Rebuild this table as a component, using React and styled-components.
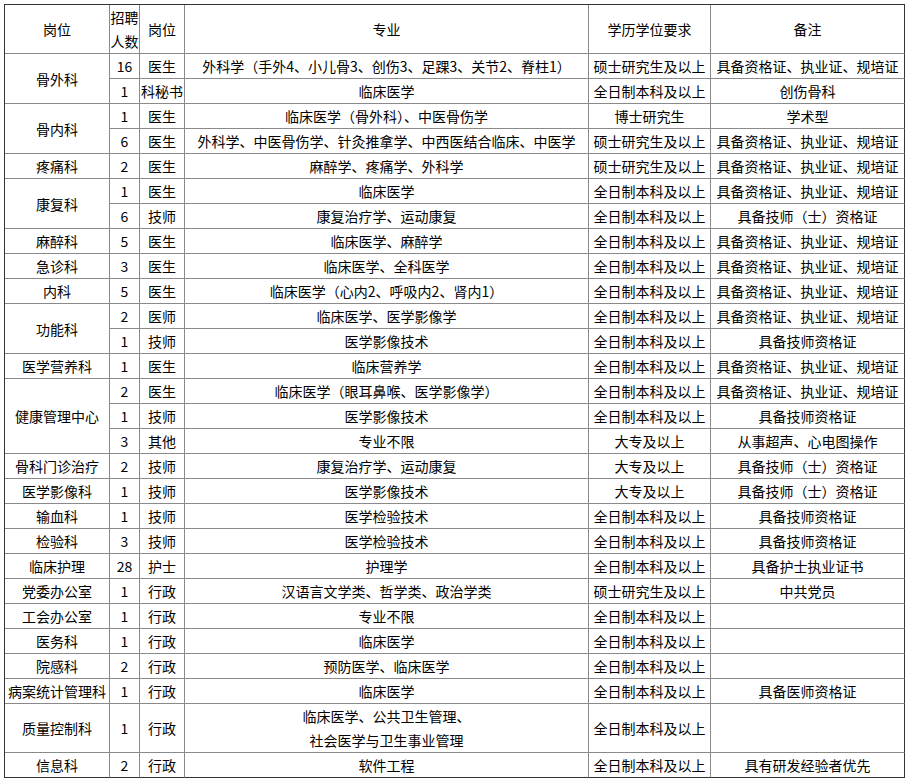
import React from 'react';
import styled, { createGlobalStyle } from 'styled-components';

const GlobalStyle = createGlobalStyle`
  body {
    margin: 0;
    background: #fff;
  }
`;

const OUTER = '#333';
const INNER = '#8a8a8a';

const Page = styled.div`
  padding: 4px;
  font-family: 'Noto Sans CJK SC', 'Noto Sans', sans-serif;
  font-size: 14px;
  color: #000;
`;

const Table = styled.table`
  width: 901px;
  table-layout: fixed;
  border-collapse: separate;
  border-spacing: 0;
  border-top: 1px solid ${OUTER};
  border-left: 1px solid ${OUTER};

  tr:last-child td {
    border-bottom-color: ${OUTER};
  }
  td:last-child,
  th:last-child {
    border-right-color: ${OUTER};
  }
`;

// width = column width minus its 1px right border
const HeadCell = styled.th`
  width: ${({ $width }) => $width - 1}px;
  height: 48px;
  padding: 0;
  font-weight: normal;
  line-height: 24px;
  text-align: center;
  border-right: 1px solid ${INNER};
  border-bottom: 1px solid ${INNER};
`;

const Cell = styled.td`
  height: ${({ $tall }) => ($tall ? 48 : 24)}px;
  padding: 0;
  line-height: 24px;
  text-align: center;
  white-space: nowrap;
  overflow: hidden;
  border-right: 1px solid ${INNER};
  border-bottom: 1px solid ${INNER};
`;

const heads = [
  ['岗位', 105],
  [<>招聘<br />人数</>, 30],
  ['岗位', 45],
  ['专业', 404],
  ['学历学位要求', 122],
  ['备注', 194],
];

const CERT = '具备资格证、执业证、规培证';
const FULL = '全日制本科及以上';
const MASTER = '硕士研究生及以上';

// [科室, 跨行数, 人数, 岗位, 专业, 学历, 备注, 两行高]
const rows = [
  ['骨外科', 2, '16', '医生', '外科学（手外4、小儿骨3、创伤3、足踝3、关节2、脊柱1）', MASTER, CERT],
  [null, 0, '1', '科秘书', '临床医学', FULL, '创伤骨科'],
  ['骨内科', 2, '1', '医生', '临床医学（骨外科）、中医骨伤学', '博士研究生', '学术型'],
  [null, 0, '6', '医生', '外科学、中医骨伤学、针灸推拿学、中西医结合临床、中医学', MASTER, CERT],
  ['疼痛科', 1, '2', '医生', '麻醉学、疼痛学、外科学', MASTER, CERT],
  ['康复科', 2, '1', '医生', '临床医学', FULL, CERT],
  [null, 0, '6', '技师', '康复治疗学、运动康复', FULL, '具备技师（士）资格证'],
  ['麻醉科', 1, '5', '医生', '临床医学、麻醉学', FULL, CERT],
  ['急诊科', 1, '3', '医生', '临床医学、全科医学', FULL, CERT],
  ['内科', 1, '5', '医生', '临床医学（心内2、呼吸内2、肾内1）', FULL, CERT],
  ['功能科', 2, '2', '医师', '临床医学、医学影像学', FULL, CERT],
  [null, 0, '1', '技师', '医学影像技术', FULL, '具备技师资格证'],
  ['医学营养科', 1, '1', '医生', '临床营养学', FULL, CERT],
  ['健康管理中心', 3, '2', '医生', '临床医学（眼耳鼻喉、医学影像学）', FULL, CERT],
  [null, 0, '1', '技师', '医学影像技术', FULL, '具备技师资格证'],
  [null, 0, '3', '其他', '专业不限', '大专及以上', '从事超声、心电图操作'],
  ['骨科门诊治疗', 1, '2', '技师', '康复治疗学、运动康复', '大专及以上', '具备技师（士）资格证'],
  ['医学影像科', 1, '1', '技师', '医学影像技术', '大专及以上', '具备技师（士）资格证'],
  ['输血科', 1, '1', '技师', '医学检验技术', FULL, '具备技师资格证'],
  ['检验科', 1, '3', '技师', '医学检验技术', FULL, '具备技师资格证'],
  ['临床护理', 1, '28', '护士', '护理学', FULL, '具备护士执业证书'],
  ['党委办公室', 1, '1', '行政', '汉语言文学类、哲学类、政治学类', MASTER, '中共党员'],
  ['工会办公室', 1, '1', '行政', '专业不限', FULL, ''],
  ['医务科', 1, '1', '行政', '临床医学', FULL, ''],
  ['院感科', 1, '2', '行政', '预防医学、临床医学', FULL, ''],
  ['病案统计管理科', 1, '1', '行政', '临床医学', FULL, '具备医师资格证'],
  ['质量控制科', 1, '1', '行政', <>临床医学、公共卫生管理、<br />社会医学与卫生事业管理</>, FULL, '', true],
  ['信息科', 1, '2', '行政', '软件工程', FULL, '具有研发经验者优先'],
];

export default function App() {
  return (
    <Page>
      <GlobalStyle />
      <Table>
        <thead>
          <tr>
            {heads.map(([label, width], i) => (
              <HeadCell key={i} $width={width}>{label}</HeadCell>
            ))}
          </tr>
        </thead>
        <tbody>
          {rows.map(([dept, span, count, post, major, degree, note, tall], i) => (
            <tr key={i}>
              {dept && <Cell rowSpan={span} $tall={tall}>{dept}</Cell>}
              <Cell $tall={tall}>{count}</Cell>
              <Cell $tall={tall}>{post}</Cell>
              <Cell $tall={tall}>{major}</Cell>
              <Cell $tall={tall}>{degree}</Cell>
              <Cell $tall={tall}>{note}</Cell>
            </tr>
          ))}
        </tbody>
      </Table>
    </Page>
  );
}
